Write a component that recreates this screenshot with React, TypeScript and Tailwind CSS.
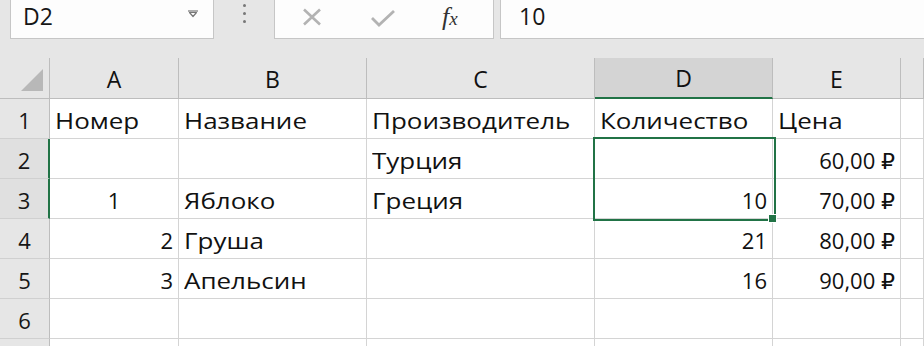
import React from 'react';

type Cell = { v: string; a?: 'l' | 'r' | 'c' };

const cols = ['A', 'B', 'C', 'D', 'E', ''];

const rows: Cell[][] = [
  [{ v: 'Номер' }, { v: 'Название' }, { v: 'Производитель' }, { v: 'Количество' }, { v: 'Цена' }, { v: '' }],
  [{ v: '' }, { v: '' }, { v: 'Турция' }, { v: '' }, { v: '60,00 ₽', a: 'r' }, { v: '' }],
  [{ v: '1', a: 'c' }, { v: 'Яблоко' }, { v: 'Греция' }, { v: '10', a: 'r' }, { v: '70,00 ₽', a: 'r' }, { v: '' }],
  [{ v: '2', a: 'r' }, { v: 'Груша' }, { v: '' }, { v: '21', a: 'r' }, { v: '80,00 ₽', a: 'r' }, { v: '' }],
  [{ v: '3', a: 'r' }, { v: 'Апельсин' }, { v: '' }, { v: '16', a: 'r' }, { v: '90,00 ₽', a: 'r' }, { v: '' }],
  [{ v: '' }, { v: '' }, { v: '' }, { v: '' }, { v: '' }, { v: '' }],
  [{ v: '' }, { v: '' }, { v: '' }, { v: '' }, { v: '' }, { v: '' }],
];

const alignClass = {
  l: 'justify-start pl-[5px]',
  r: 'justify-end pr-[5px]',
  c: 'justify-center',
};

function NameBoxArrow() {
  return (
    <svg width="12" height="8" viewBox="0 0 12 8" className="mt-[1px]">
      <path d="M1 1 H11" stroke="#777" strokeWidth="1.2" />
      <path d="M2.5 2.5 L9.5 2.5 L6 6.5 Z" fill="none" stroke="#777" strokeWidth="1.2" strokeLinejoin="round" />
    </svg>
  );
}

function Toolbar() {
  return (
    <div className="flex h-[39px] items-stretch">
      <div className="ml-[10px] flex w-[204px] items-center justify-between border-x border-b border-[#c6c6c6] bg-[#fdfdfd] pl-[12px] pr-[14px]">
        <span className="pb-[5px] text-[23px] text-[#161616]">D2</span>
        <div className="mb-[12px]">
          <NameBoxArrow />
        </div>
      </div>
      <div className="flex w-[60px] flex-col items-center gap-[5px] pt-[4px]">
        <span className="h-[3px] w-[3px] rounded-full bg-[#777]" />
        <span className="h-[3px] w-[3px] rounded-full bg-[#777]" />
        <span className="h-[3px] w-[3px] rounded-full bg-[#777]" />
      </div>
      <div className="flex w-[220px] items-center border-x border-b border-[#c6c6c6] bg-[#fdfdfd]">
        <svg width="22" height="18" viewBox="0 0 22 18" className="mb-[4px] ml-[26px]">
          <path d="M3 1.5 L19 16.5 M19 1.5 L3 16.5" stroke="#b3b3b3" strokeWidth="2.6" />
        </svg>
        <svg width="26" height="18" viewBox="0 0 26 18" className="mb-[3px] ml-[47px]">
          <path d="M2 9 L9 16 L24 2" fill="none" stroke="#b3b3b3" strokeWidth="2.8" />
        </svg>
        <span
          className="mb-[6px] ml-[46px] italic text-[#333]"
          style={{ fontFamily: '"Liberation Serif", serif' }}
        >
          <span className="text-[26px]">f</span>
          <span className="text-[19px]">x</span>
        </span>
      </div>
      <div className="ml-[6px] flex flex-1 items-center border-b border-l border-[#c6c6c6] bg-[#fdfdfd] pl-[18px]">
        <span className="pb-[5px] text-[23px] text-[#161616]">10</span>
      </div>
    </div>
  );
}

export default function App() {
  return (
    <div
      className="h-[346px] w-[924px] overflow-hidden bg-[#e6e6e6]"
      style={{ fontFamily: '"Open Sans", "DejaVu Sans", sans-serif' }}
    >
      <Toolbar />
      <div className="relative mt-[19px]">
        <div className="grid grid-cols-[50px_129px_188px_228px_178px_128px_1fr] grid-rows-[41px_repeat(7,40px)]">
          {/* header row */}
          <div className="relative border-b border-r border-[#bdbdbd] bg-[#e6e6e6]">
            <svg width="24" height="24" viewBox="0 0 24 24" className="absolute left-[20px] top-[10px]">
              <path d="M23 1 L23 23 L1 23 Z" fill="#b8b8b8" />
            </svg>
          </div>
          {cols.map((c, i) => (
            <div
              key={'h' + i}
              className={
                c === 'D'
                  ? 'flex items-center justify-center border-b-2 border-r border-b-[#217346] border-r-[#bdbdbd] bg-[#d4d4d4] pt-[2px] text-[23px] text-[#111]'
                  : 'flex items-center justify-center border-b border-r border-[#bdbdbd] bg-[#e6e6e6] pt-[2px] text-[23px] text-[#111]'
              }
            >
              {c}
            </div>
          ))}
          {rows.map((row, r) => (
            <React.Fragment key={r}>
              <div
                className={
                  r === 1 || r === 2
                    ? 'flex items-center justify-center border-b border-r-2 border-b-[#d0d0d0] border-r-[#217346] bg-[#e0e0e0] pt-[3px] text-[22px] text-[#161616]'
                    : 'flex items-center justify-center border-b border-r border-b-[#d0d0d0] border-r-[#bdbdbd] bg-[#e6e6e6] pt-[3px] text-[22px] text-[#161616]'
                }
              >
                {r < 6 ? r + 1 : ''}
              </div>
              {row.map((cell, ci) => {
                const cyr = /[а-яА-ЯёЁ]/.test(cell.v) && !cell.v.includes('₽');
                return (
                  <div
                    key={ci}
                    className={`flex items-center whitespace-nowrap border-b border-r border-[#d4d4d4] bg-white pt-[3px] text-[22px] text-[#111] ${alignClass[cell.a ?? 'l']}`}
                  >
                    {cyr ? (
                      <span className="inline-block origin-left scale-x-[1.18]">{cell.v}</span>
                    ) : (
                      cell.v
                    )}
                  </div>
                );
              })}
            </React.Fragment>
          ))}
        </div>
        {/* selection D2:D3 */}
        <div className="pointer-events-none absolute left-[593px] top-[79px] h-[84px] w-[183px] border-2 border-[#217346]" />
        <div className="pointer-events-none absolute left-[768px] top-[156px] h-[9px] w-[9px] border border-white bg-[#217346]" />
      </div>
    </div>
  );
}
